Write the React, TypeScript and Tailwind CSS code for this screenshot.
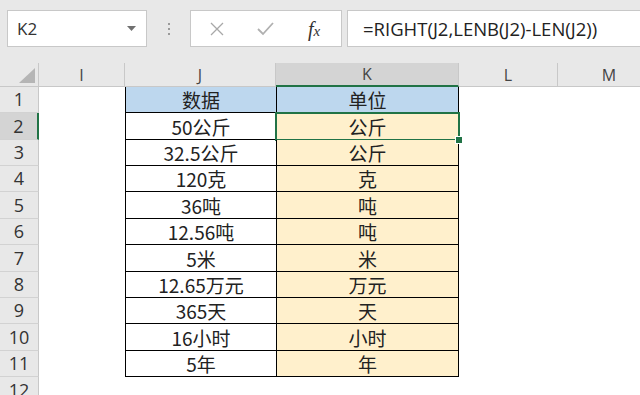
import React from "react";

const rows: [string, string][] = [
  ["数据", "单位"],
  ["50公斤", "公斤"],
  ["32.5公斤", "公斤"],
  ["120克", "克"],
  ["36吨", "吨"],
  ["12.56吨", "吨"],
  ["5米", "米"],
  ["12.65万元", "万元"],
  ["365天", "天"],
  ["16小时", "小时"],
  ["5年", "年"],
];
const heights = [26, 27, 26, 26, 27, 26, 27, 26, 26, 27, 26];

const font = { fontFamily: '"Noto Sans CJK SC", "Noto Sans", sans-serif' };

export default function App() {
  return (
    <div className="w-[640px] h-[395px] overflow-hidden bg-white text-[#222]" style={font}>
      {/* toolbar */}
      <div className="h-[63px] bg-[#e8e8e8] flex items-start pt-[10px] pl-[7px]">
        <div className="w-[140px] h-[37px] bg-white border border-[#c8c8c8] flex items-center pl-[9px] pr-[10px] justify-between">
          <span className="text-[17px] text-[#333]" style={{ fontFamily: '"Open Sans", sans-serif' }}>K2</span>
          <svg width="9" height="6" viewBox="0 0 9 6"><path d="M0 0 L9 0 L4.5 5 Z" fill="#707070" /></svg>
        </div>
        <div className="w-[43px] h-[37px] flex flex-col items-center justify-center gap-[3px]">
          <span className="w-[2px] h-[2px] bg-[#9a9a9a]" />
          <span className="w-[2px] h-[2px] bg-[#9a9a9a]" />
          <span className="w-[2px] h-[2px] bg-[#9a9a9a]" />
        </div>
        <div className="w-[152px] h-[37px] bg-white border border-[#c8c8c8] flex items-center">
          <div className="w-[52px] flex justify-center">
            <svg width="14" height="14" viewBox="0 0 14 14"><path d="M1 1 L13 13 M13 1 L1 13" stroke="#a8a8a8" strokeWidth="1.3" /></svg>
          </div>
          <div className="w-[44px] flex justify-center">
            <svg width="17" height="14" viewBox="0 0 17 14"><path d="M1 7 L6 12 L16 1" stroke="#b0b0b0" strokeWidth="1.8" fill="none" /></svg>
          </div>
          <div className="w-[54px] flex justify-center">
            <span className="italic text-[20px] text-[#333] leading-none" style={{ fontFamily: '"Liberation Serif", serif' }}>f<span className="text-[15px]">x</span></span>
          </div>
        </div>
        <div className="ml-[5px] flex-1 h-[37px] bg-white border border-[#c8c8c8] border-r-0 flex items-center pl-[15px]">
          <span className="text-[18.5px] text-[#222]" style={{ fontFamily: '"Open Sans", sans-serif' }}>=RIGHT(J2,LENB(J2)-LEN(J2))</span>
        </div>
      </div>

      {/* column headers */}
      <div className="flex h-[24px] bg-[#e8e8e8] text-[16px] text-[#444]" style={{ fontFamily: '"Open Sans", sans-serif' }}>
        <div className="w-[39px] border-r border-b border-[#c8c8c8] flex items-end justify-end pr-[3px] pb-[3px]">
          <svg width="16" height="15" viewBox="0 0 16 15"><path d="M16 0 L16 15 L0 15 Z" fill="#b5b5b5" /></svg>
        </div>
        <div className="w-[86px] border-r border-b border-[#c8c8c8] flex items-center justify-center">I</div>
        <div className="w-[151px] border-r border-b border-[#c8c8c8] flex items-center justify-center">J</div>
        <div className="w-[183px] border-r border-b-2 border-r-[#c8c8c8] border-b-[#217346] bg-[#d4d4d4] flex items-center justify-center">K</div>
        <div className="w-[99px] border-r border-b border-[#c8c8c8] flex items-center justify-center">L</div>
        <div className="flex-1 border-b border-[#c8c8c8] flex items-center justify-center pl-[20px]">M</div>
      </div>

      {rows.map(([j, k], i) => {
        const h = heights[i];
        const first = i === 0;
        const sel = i === 1;
        return (
          <div key={i} className="flex" style={{ height: h }}>
            <div
              className={`w-[39px] border-b border-b-[#d2d2d2] flex items-center justify-center text-[18px] text-[#333] ${sel ? "bg-[#d4d4d4] border-r-2 border-r-[#217346]" : "bg-[#e8e8e8] border-r border-r-[#c8c8c8]"}`}
              style={{ fontFamily: '"Open Sans", sans-serif' }}
            >
              {i + 1}
            </div>
            <div className="w-[86px]" />
            <div
              className={`w-[151px] border-l border-b border-black flex items-center justify-center text-[19px] leading-none ${first ? "bg-[#bdd7ee]" : "bg-white"}`}
            >
              {j}
            </div>
            <div
              className={`relative w-[183px] border-l border-r border-b border-black flex items-center justify-center text-[19px] leading-none ${first ? "bg-[#bdd7ee]" : "bg-[#fff0cc]"}`}
            >
              {k}
              {sel && (
                <div className="absolute left-[-2px] right-[-2px] top-[-1px] bottom-[-2px] border-2 border-[#217346]">
                  <div className="absolute right-[-5px] bottom-[-5px] w-[8px] h-[8px] bg-[#217346] border border-white z-10" />
                </div>
              )}
            </div>
            <div className="flex-1" />
          </div>
        );
      })}
      <div className="flex h-[20px]">
        <div className="w-[39px] bg-[#e8e8e8] border-r border-[#c8c8c8] flex justify-center pt-[1px] text-[18px] leading-[24px] text-[#333]" style={{ fontFamily: '"Open Sans", sans-serif' }}>12</div>
        <div className="flex-1" />
      </div>
    </div>
  );
}
